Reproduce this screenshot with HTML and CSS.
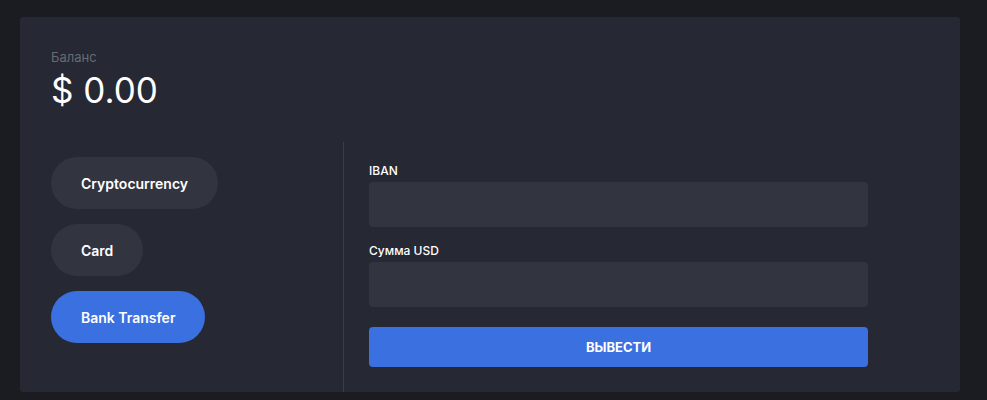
FILE: index.html
```html
<!DOCTYPE html>
<html lang="ru">
  <head>
    <meta charset="utf-8" />
    <meta name="viewport" content="width=device-width, initial-scale=1" />
    <title>Вывод средств</title>
    <link rel="stylesheet" href="styles.css">
  </head>
  <body>
    <div class="wallet">
      <div class="balance">
        <div class="balance-label">Баланс</div>
        <div class="balance-value">$ 0.00</div>
      </div>

      <div class="withdraw">
        <div class="methods">
          <button class="method">Cryptocurrency</button>
          <button class="method">Card</button>
          <button class="method active">Bank Transfer</button>
        </div>

        <form class="form">
          <label class="field">
            <span class="field-label">IBAN</span>
            <input class="field-input" type="text" />
          </label>
          <label class="field">
            <span class="field-label">Сумма USD</span>
            <input class="field-input" type="text" />
          </label>
          <button class="submit" type="button">ВЫВЕСТИ</button>
        </form>
      </div>
    </div>
  </body>
</html>
```

FILE: styles.css
```css
*,
*::before,
*::after {
  box-sizing: border-box;
  margin: 0;
}

body {
  background: #1b1c21;
  color: #fff;
  font-family: Inter, "Noto Sans", sans-serif;
  padding: 17px 20px;
}

.wallet {
  background: #262833;
  border-radius: 3px;
  padding: 32px 31px 0;
  width: 940px;
}

.balance-label {
  color: #686a73;
  font-size: 13px;
  line-height: 16px;
}

.balance-value {
  font-size: 35px;
  font-weight: 400;
  line-height: 40px;
  margin-top: 5px;
}

.withdraw {
  display: flex;
  margin-top: 32px;
}

.methods {
  align-items: flex-start;
  border-right: 1px solid #3a3c47;
  display: flex;
  flex-direction: column;
  gap: 15px;
  padding-top: 15px;
  width: 293px;
}

.method {
  background: #32343f;
  border: 0;
  border-radius: 26px;
  color: #fff;
  cursor: pointer;
  font-family: inherit;
  font-size: 14px;
  font-weight: 600;
  height: 52px;
  padding: 0 30px;
}

.method.active {
  background: #3a70e0;
}

.form {
  display: flex;
  flex-direction: column;
  gap: 16px;
  padding: 21px 0 25px 25px;
  width: 524px;
}

.field {
  display: flex;
  flex-direction: column;
  gap: 3px;
}

.field-label {
  font-size: 12px;
  font-weight: 500;
  line-height: 16px;
}

.field-input {
  background: #32343f;
  border: 0;
  border-radius: 4px;
  color: #fff;
  font-family: inherit;
  font-size: 14px;
  height: 45px;
  outline: none;
  padding: 0 12px;
}

.submit {
  background: #3a70e0;
  border: 0;
  border-radius: 4px;
  color: #fff;
  cursor: pointer;
  font-family: inherit;
  font-size: 13px;
  font-weight: 700;
  height: 40px;
  margin-top: 4px;
}
```
